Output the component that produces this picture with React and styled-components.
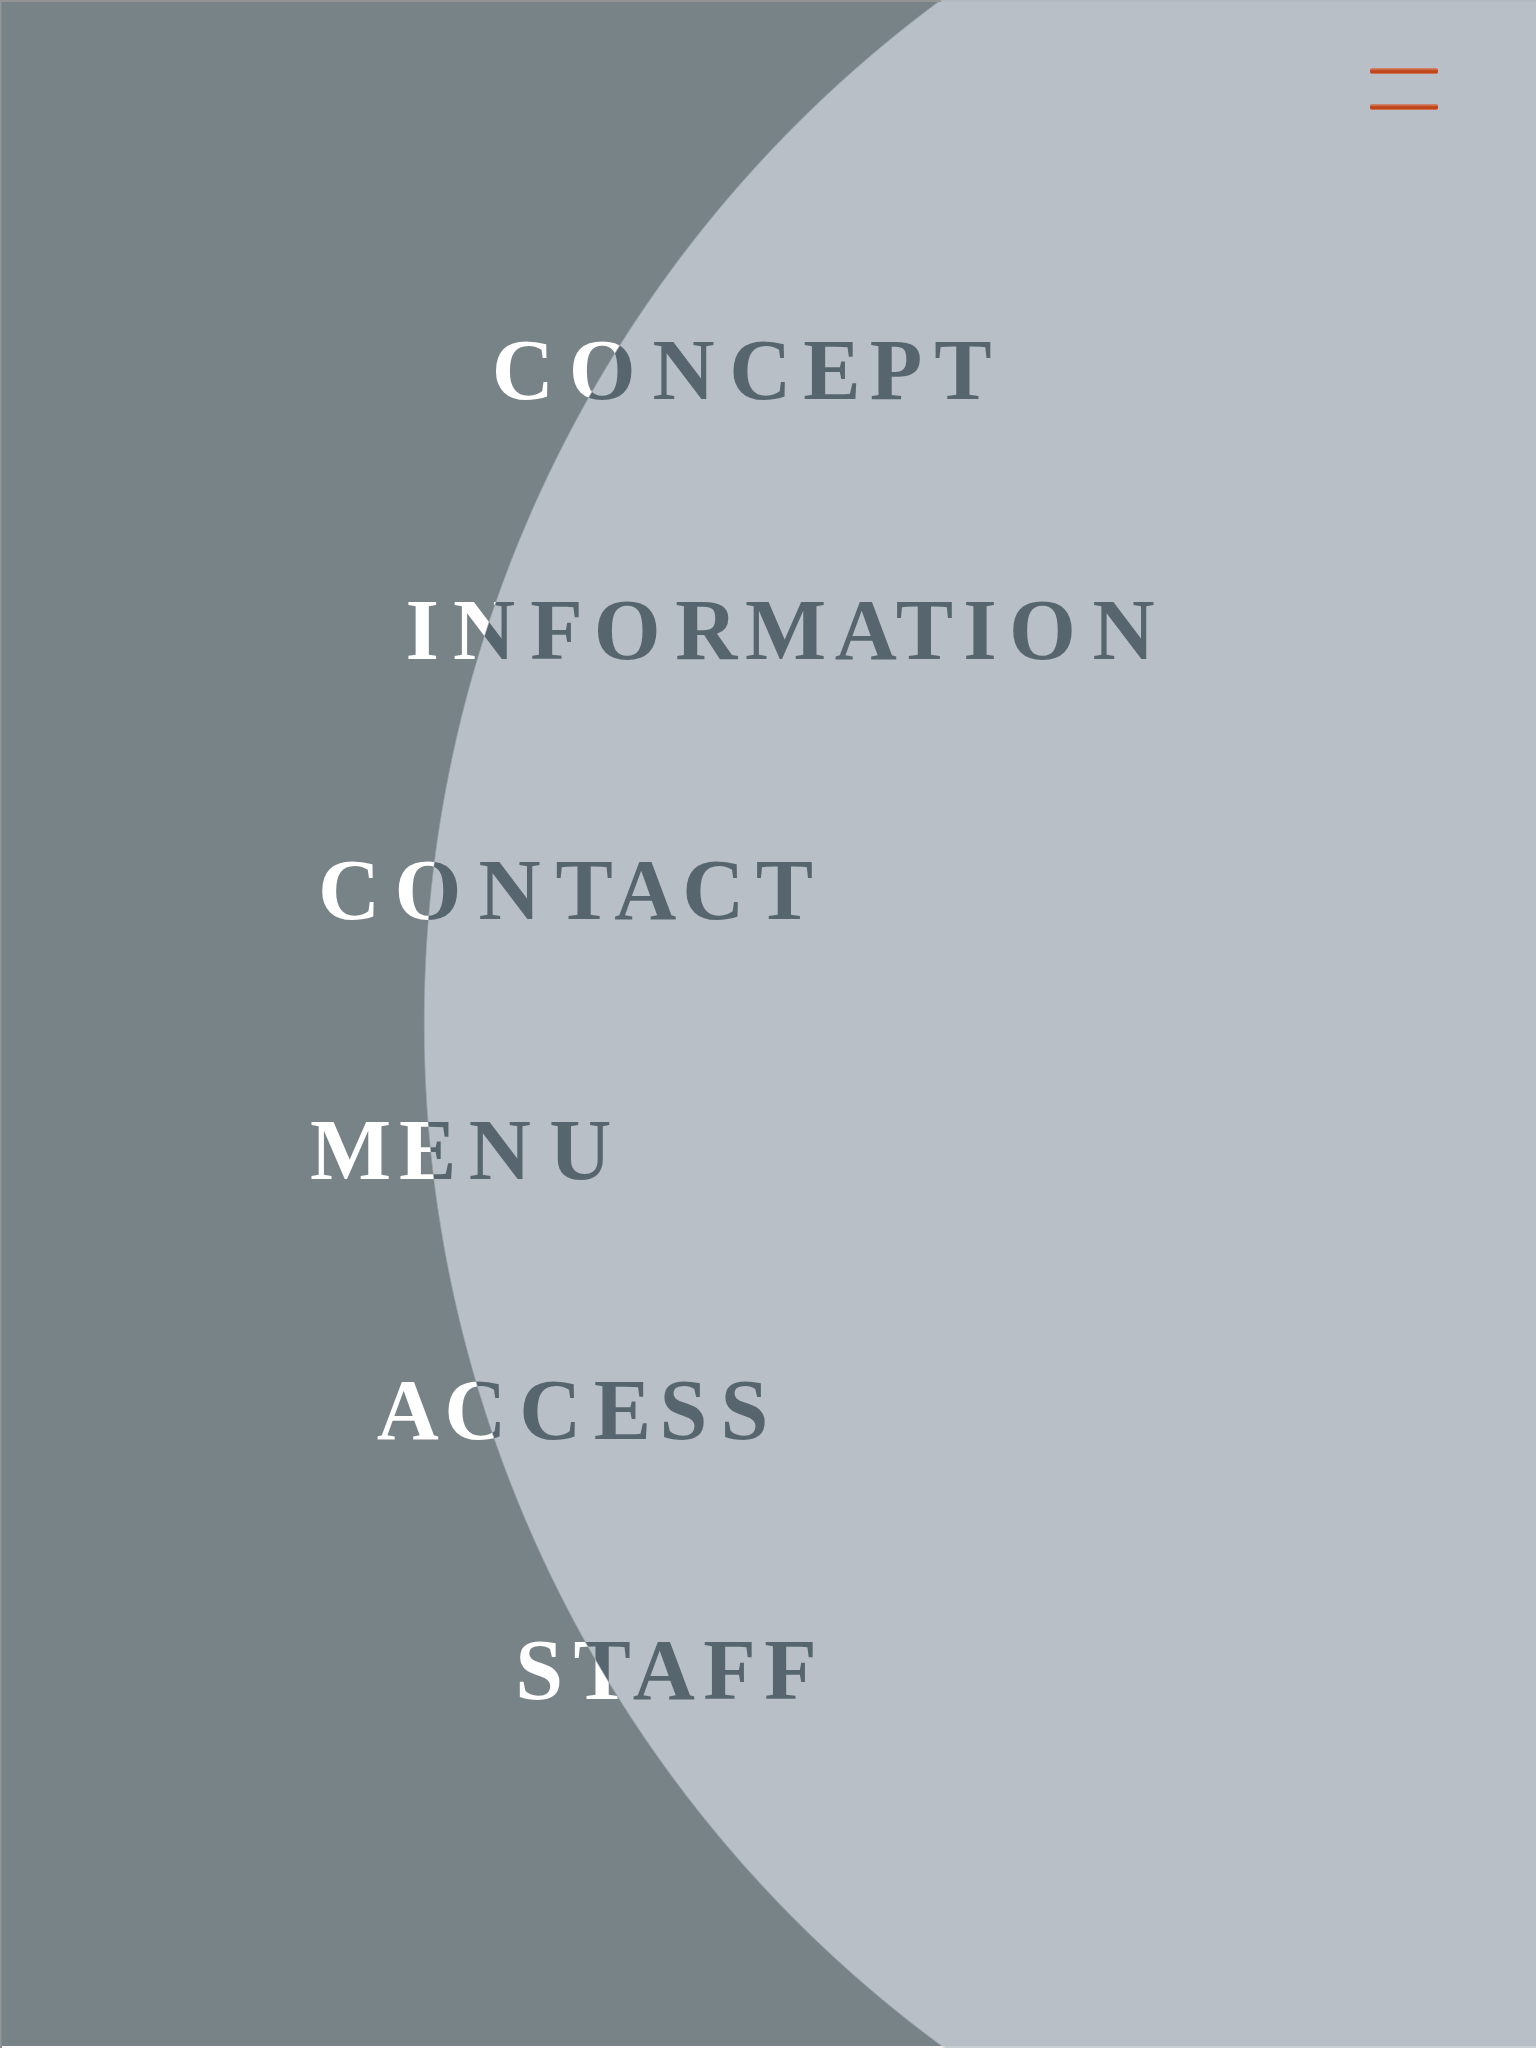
import React from "react";
import styled, { createGlobalStyle } from "styled-components";

const GlobalStyle = createGlobalStyle`
  * { box-sizing: border-box; }
  body { margin: 0; background: #b8bfc6; }
`;

const disc = (inside, outside) =>
  `radial-gradient(circle at 1694.6px 1022.7px, ${inside} 1269.6px, ${outside} 1271.2px)`;

const Page = styled.main`
  position: relative;
  width: 1536px;
  height: 2048px;
  overflow: hidden;
  background:
    linear-gradient(to right, #929594 940px, #b3bac0 942px) 0 0 / 100% 2px no-repeat,
    linear-gradient(to right, #929594 1px, #858b8d 1px) 0 0 / 2px 100% no-repeat,
    linear-gradient(to right, #fcfcfc 940px, #cbd0d5 946px) 0 100% / 100% 2px no-repeat,
    ${disc("#b8bfc6", "#788388")};
`;

const Nav = styled.nav`
  width: 1536px;
  height: 2046px;
  padding-top: 240px;
  background: ${disc("#56656e", "#ffffff")};
  background-clip: text;
  -webkit-background-clip: text;
  -webkit-text-fill-color: transparent;
  color: #56656e;
`;

const List = styled.ul`
  display: flex;
  flex-direction: column;
  margin: 0;
  padding: 0;
  list-style: none;
`;

const Item = styled.li`
  height: 260px;
  padding-left: ${(p) => p.$indent}px;
`;

const Link = styled.a`
  display: block;
  font-family: "Liberation Serif", "Times New Roman", serif;
  font-size: 86px;
  font-weight: 700;
  line-height: 260px;
  font-kerning: none;
  white-space: nowrap;
  color: inherit;
  text-decoration: none;
`;

const Letter = styled.span`
  letter-spacing: ${(p) => p.$gap}px;
`;

const MenuButton = styled.button`
  position: absolute;
  top: 68px;
  left: 1370px;
  display: flex;
  flex-direction: column;
  gap: 30px;
  width: 68px;
  padding: 0;
  border: 0;
  background: none;
`;

const Bar = styled.span`
  height: 6px;
  border-radius: 2px;
  background: linear-gradient(#cf8067 0 1px, #c9684a 1px 2px, #c44e24 2px 3px, #c04519 3px 5px, #cc7252 5px);
`;

const links = [
  { label: "CONCEPT", indent: 491.7, gaps: [14.9, 16.9, 14.6, 11.9, 9.2, 11.8, 0] },
  { label: "INFORMATION", indent: 405.4, gaps: [14.1, 15.1, 11.1, 14.4, 7.8, 8.6, -1.3, 10.2, 12.4, 16.6, 0] },
  { label: "CONTACT", indent: 318, gaps: [14.5, 17.1, 14.8, 1.3, 6, 11.4, 0] },
  { label: "MENU", indent: 310, gaps: [7.7, 12.6, 18.2, 0] },
  { label: "ACCESS", indent: 376.7, gaps: [5.5, 12.9, 12.3, 8.3, 13.2, 0] },
  { label: "STAFF", indent: 515.3, gaps: [10.4, 1.8, 8.4, 8.4, 0] },
];

export default function App() {
  return (
    <>
      <GlobalStyle />
      <Page>
        <Nav>
          <List>
            {links.map(({ label, indent, gaps }) => (
              <Item key={label} $indent={indent}>
                <Link>
                  {[...label].map((char, i) => (
                    <Letter key={i} $gap={gaps[i]}>{char}</Letter>
                  ))}
                </Link>
              </Item>
            ))}
          </List>
        </Nav>
        <MenuButton aria-label="Menu">
          <Bar />
          <Bar />
        </MenuButton>
      </Page>
    </>
  );
}
